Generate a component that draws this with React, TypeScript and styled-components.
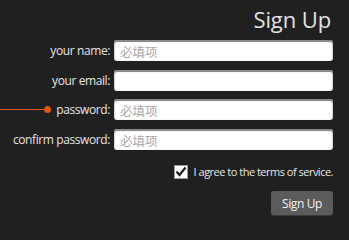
import React from "react";
import styled, { createGlobalStyle } from "styled-components";

const Global = createGlobalStyle`
  html, body { margin: 0; padding: 0; background: #202020; }
  body { font-family: "Open Sans", "Noto Sans CJK SC", sans-serif; }
  * { box-sizing: border-box; }
`;

const Page = styled.div`
  width: 349px;
  height: 229px;
  overflow: hidden;
  background: #202020;
  padding: 4px 16px 0 0;
  display: flex;
  flex-direction: column;
  align-items: stretch;
`;

const Title = styled.h1`
  margin: 0;
  font-weight: 400;
  font-size: 22px;
  line-height: 30px;
  color: #e2e2e2;
  text-align: right;
  padding-right: 2px;
  letter-spacing: -0.1px;
`;

const Form = styled.form`
  margin-top: 6px;
  display: grid;
  grid-template-columns: 110px 219px;
  column-gap: 4px;
  row-gap: 8.7px;
  align-items: center;
`;

const Label = styled.label`
  display: flex;
  align-items: center;
  justify-content: flex-end;
  font-size: 12px;
  color: #e6e6e6;
  letter-spacing: -0.4px;
  white-space: nowrap;
  height: 21px;
`;

const Lead = styled.span`
  flex: 1;
  height: 1px;
  background: #e0580f;
`;

const Dot = styled.span`
  width: 7px;
  height: 7px;
  border-radius: 50%;
  background: #e0580f;
  margin-right: 5px;
  margin-left: -1px;
`;

const Input = styled.input`
  height: 21px;
  width: 219px;
  border: none;
  border-radius: 3px;
  background: #fff;
  box-shadow: inset 0 2px 0 #8a8a8a, inset 0 1px 2px #666;
  padding: 2px 6px 0;
  font-family: "Noto Sans CJK SC", sans-serif;
  font-size: 12.5px;
  color: #333;
  outline: none;
  &::placeholder { color: #a8a8a8; }
`;

const AgreeRow = styled.div`
  margin-top: 14px;
  display: flex;
  justify-content: flex-end;
  align-items: center;
  gap: 6px;
  font-size: 11px;
  color: #e6e6e6;
  letter-spacing: -0.5px;
`;

const Box = styled.span`
  width: 14px;
  height: 14px;
  background: #fff;
  border: 1px solid #9a9a9a;
  display: flex;
  align-items: center;
  justify-content: center;
`;

const ButtonRow = styled.div`
  margin-top: 12px;
  display: flex;
  justify-content: flex-end;
`;

const Button = styled.button`
  width: 62px;
  height: 24px;
  border: none;
  border-radius: 3px;
  background: #5b5b5b;
  color: #f2f2f2;
  font-family: "Open Sans", sans-serif;
  font-size: 12px;
  letter-spacing: -0.4px;
  padding: 0;
  box-shadow: 0 1px 0 #3a3a3a;
`;

export default function App() {
  return (
    <>
      <Global />
      <Page>
        <Title>Sign Up</Title>
        <Form onSubmit={(e) => e.preventDefault()}>
          <Label>your name:</Label>
          <Input placeholder="必填项" />
          <Label>your email:</Label>
          <Input />
          <Label>
            <Lead />
            <Dot />
            password:
          </Label>
          <Input type="password" placeholder="必填项" />
          <Label>confirm password:</Label>
          <Input type="password" placeholder="必填项" />
        </Form>
        <AgreeRow>
          <Box>
            <svg width="12" height="11" viewBox="0 0 12 11">
              <path d="M1.5 5.5 L4.5 9 L10.5 1.5" fill="none" stroke="#1e1e1e" strokeWidth="2.2" />
            </svg>
          </Box>
          I agree to the terms of service.
        </AgreeRow>
        <ButtonRow>
          <Button type="button">Sign Up</Button>
        </ButtonRow>
      </Page>
    </>
  );
}
